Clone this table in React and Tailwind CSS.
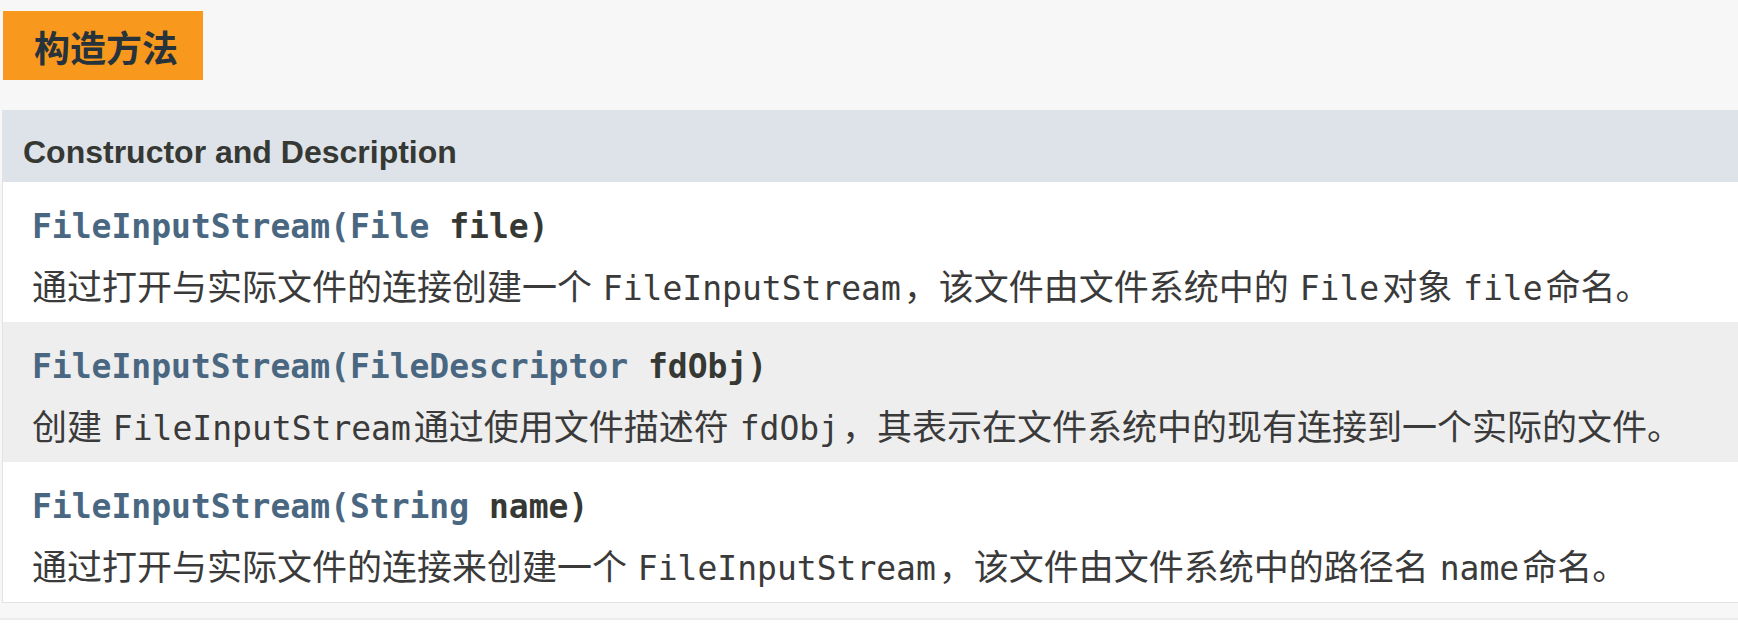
import React from "react";

const mono = { fontFamily: '"DejaVu Sans Mono", "Liberation Mono", monospace' };

function Code({ children, bold }) {
  return (
    <span className={`mx-[3px] text-[33px] ${bold ? "font-bold" : "font-normal"}`} style={mono}>
      {children}
    </span>
  );
}

function Row({ bg, name, type, param, desc }) {
  return (
    <div className={`${bg} pl-[29px] pt-[20px] pb-[12px]`}>
      <div className="h-[50px] leading-[50px] whitespace-nowrap font-bold text-[33px] font-['DejaVu_Sans_Mono',monospace]">
        <span className="text-[#4a6782]">{name}(</span>
        <span className="text-[#4a6782]">{type}</span>
        <span className="text-[#353833]"> {param})</span>
      </div>
      <div className="mt-[8px] h-[50px] leading-[50px] whitespace-nowrap text-[35px] text-[#3a3a3a] font-['Noto_Sans_CJK_SC',sans-serif]">
        {desc}
      </div>
    </div>
  );
}

export default function App() {
  return (
    <div className="w-[1738px] h-[636px] bg-white overflow-hidden">
      <div className="bg-[#f7f7f7] pb-[15px]">
        <div className="pt-[11px] pl-[3px] h-[110px]">
          <div className="w-[200px] h-[69px] bg-[#f8981d] flex items-center pl-[31px] font-bold text-[36px] text-[#26323c] font-['Noto_Sans_CJK_SC',sans-serif]">
            构造方法
          </div>
        </div>
        <div className="ml-[2px] border-l border-b border-[#e3e3e3]">
          <div className="bg-[#dee3e9] h-[72px] pl-[20px] pt-[22px] leading-[40px] text-[32px] font-bold text-[#353833] font-['Liberation_Sans',Arial,sans-serif]">
            Constructor and Description
          </div>
          <Row
            bg="bg-white"
            name="FileInputStream"
            type="File"
            param="file"
            desc={
              <>
                通过打开与实际文件的连接创建一个 <Code>FileInputStream</Code>，该文件由文件系统中的 <Code>File</Code>对象 <Code>file</Code>命名。
              </>
            }
          />
          <Row
            bg="bg-[#eeeeee]"
            name="FileInputStream"
            type="FileDescriptor"
            param="fdObj"
            desc={
              <>
                创建 <Code>FileInputStream</Code>通过使用文件描述符 <Code>fdObj</Code>，其表示在文件系统中的现有连接到一个实际的文件。
              </>
            }
          />
          <Row
            bg="bg-white"
            name="FileInputStream"
            type="String"
            param="name"
            desc={
              <>
                通过打开与实际文件的连接来创建一个 <Code>FileInputStream</Code>，该文件由文件系统中的路径名 <Code>name</Code>命名。
              </>
            }
          />
        </div>
      </div>
      <div className="h-[2px] bg-[#ececec]" />
    </div>
  );
}
